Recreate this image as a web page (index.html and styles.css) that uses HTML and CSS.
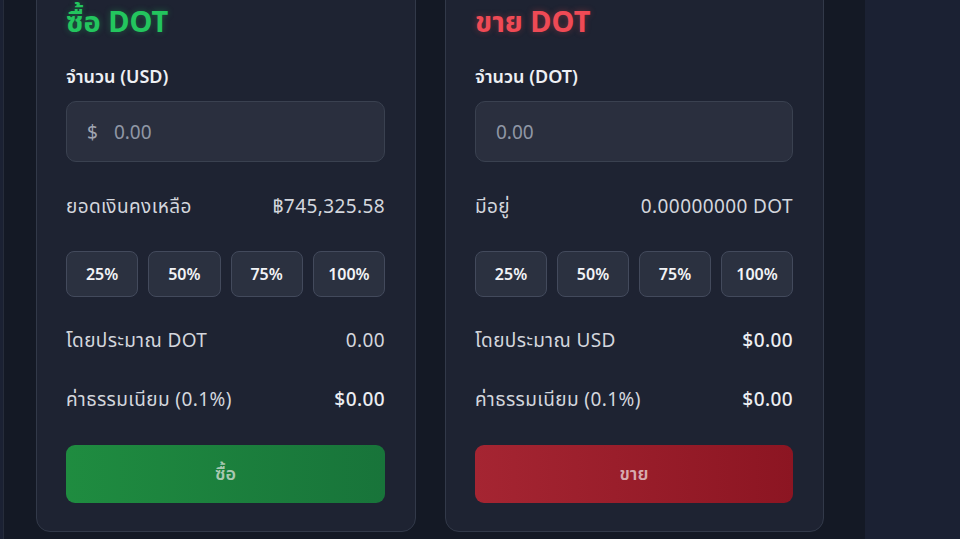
FILE: index.html
```html
<!DOCTYPE html>
<html lang="th">
<head>
<meta charset="utf-8">
<link rel="stylesheet" href="styles.css">
</head>
<body>
<div class="shell">
  <div class="grid">
    <section class="card">
      <h2 class="title buy">ซื้อ DOT</h2>
      <div class="label">จำนวน (USD)</div>
      <div class="input"><span class="prefix">$</span><span class="ph">0.00</span></div>
      <div class="row first"><span>ยอดเงินคงเหลือ</span><span>฿745,325.58</span></div>
      <div class="pcts"><button>25%</button><button>50%</button><button>75%</button><button>100%</button></div>
      <div class="row r2"><span>โดยประมาณ DOT</span><span>0.00</span></div>
      <div class="row r3"><span>ค่าธรรมเนียม (0.1%)</span><span class="strong">$0.00</span></div>
      <button class="action green">ซื้อ</button>
    </section>
    <section class="card">
      <h2 class="title sell">ขาย DOT</h2>
      <div class="label">จำนวน (DOT)</div>
      <div class="input"><span class="ph">0.00</span></div>
      <div class="row first"><span>มีอยู่</span><span>0.00000000 DOT</span></div>
      <div class="pcts"><button>25%</button><button>50%</button><button>75%</button><button>100%</button></div>
      <div class="row r2"><span>โดยประมาณ USD</span><span class="strong">$0.00</span></div>
      <div class="row r3"><span>ค่าธรรมเนียม (0.1%)</span><span class="strong">$0.00</span></div>
      <button class="action red">ขาย</button>
    </section>
  </div>
</div>
</body>
</html>
```
FILE: styles.css
```css
* { box-sizing: border-box; }
html, body { margin: 0; padding: 0; }
body {
  background: #1b2133;
  font-family: "Noto Sans", "Noto Sans Thai", "Open Sans", sans-serif;
  color: #d5d8df;
  height: 539px;
  overflow: hidden;
}
.shell {
  display: flow-root;
  width: 862px;
  height: 539px;
  margin-left: 3px;
  background: #141925;
  border-left: 1px solid #262c3a;
  padding-left: 32px;
}
.grid {
  display: grid;
  grid-template-columns: 380px 379px;
  gap: 29px;
  margin-top: -26px;
}
.card {
  background: #1e2332;
  border: 1px solid #323949;
  border-radius: 14px;
  padding: 26px 30px 28px 29px;
  display: flex;
  flex-direction: column;
}
.title {
  margin: 0;
  font-size: 29px;
  line-height: 40px;
  font-weight: 700;
}
.title.buy { color: #23c55e; text-shadow: 0 0 6px rgba(34,197,94,0.35); }
.title.sell { color: #ef4a55; text-shadow: 0 0 6px rgba(239,68,68,0.35); }
.label {
  margin-top: 23px;
  font-size: 18px;
  line-height: 24px;
  font-weight: 600;
  color: #eef0f4;
}
.input {
  margin-top: 13px;
  height: 61px;
  border-radius: 10px;
  background: #2a2f3e;
  border: 1px solid #3a4150;
  display: flex;
  align-items: center;
  padding-left: 20px;
  font-size: 19px;
  color: #9097a5;
}
.prefix { margin-right: 16px; color: #a0a6b2; }
.row {
  display: flex;
  justify-content: space-between;
  align-items: center;
  font-size: 19px;
  line-height: 24px;
  letter-spacing: 0.4px;
  color: #d3d6dd;
}
.row.first { margin-top: 32px; }
.row.r2 { margin-top: 31px; }
.row.r3 { margin-top: 35px; }
.strong { color: #eceef2; font-weight: 500; }
.pcts {
  margin-top: 33px;
  display: grid;
  grid-template-columns: repeat(4, 1fr);
  gap: 10px;
}
.pcts button {
  height: 46px;
  border-radius: 8px;
  background: #2b3140;
  border: 1px solid #434a5c;
  color: #f2f3f6;
  font-family: inherit;
  font-size: 16px;
  font-weight: 600;
  padding: 0;
}
.action {
  margin-top: 34px;
  height: 58px;
  border: none;
  border-radius: 9px;
  font-family: inherit;
  font-size: 18px;
  font-weight: 600;
  padding: 0;
}
.action.green {
  background: linear-gradient(90deg, #1f8c40, #18743a);
  color: #a9c8b2;
}
.action.red {
  background: linear-gradient(90deg, #a52532, #8c1522);
  color: #d7a9ae;
}
```
